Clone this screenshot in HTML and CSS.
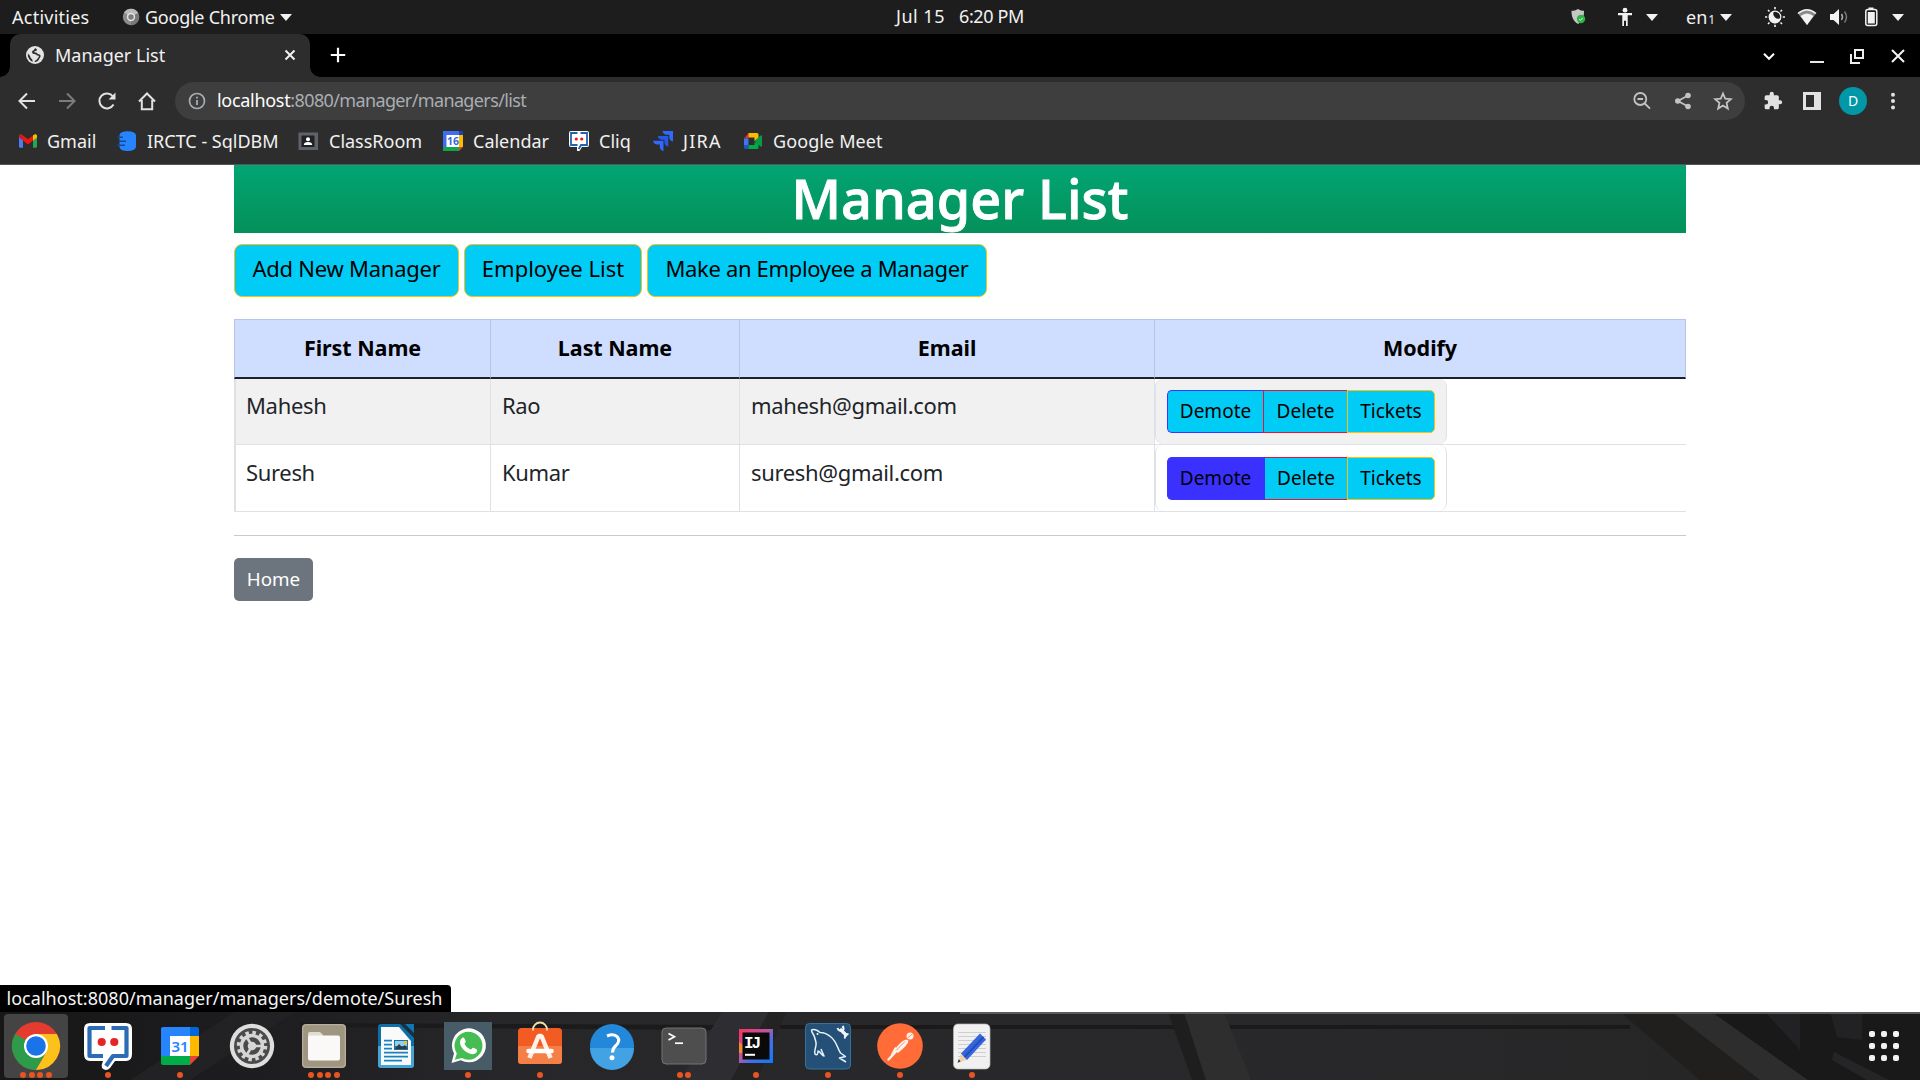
FILE: index.html
```html
<!DOCTYPE html>
<html lang="en">
<head>
<meta charset="utf-8">
<title>Manager List</title>
<link rel="stylesheet" href="styles.css">
</head>
<body>
<header class="topbar">
  <span class="activities">Activities</span>
  <span class="app-menu">
    <svg width="18" height="18" viewBox="0 0 18 18"><circle cx="9" cy="9" r="8.2" fill="#8b8b8b"/><path d="M9 9L2 4.6A8.2 8.2 0 0 1 16.2 5z" fill="#b9b9b9"/><path d="M9 9l7.2-4A8.2 8.2 0 0 1 9 17.2z" fill="#777"/><circle cx="9" cy="9" r="4.2" fill="#e4e4e4"/><circle cx="9" cy="9" r="2.7" fill="#7c7c7c"/></svg>
    <span class="app-name">Google Chrome</span>
    <svg class="caret" width="12" height="7" viewBox="0 0 12 7"><path d="M0 0h12L6 7z"/></svg>
  </span>
  <span class="clock"><span class="date">Jul 15</span><span class="time">6:20 PM</span></span>
  <span class="tray">
    <svg width="20" height="20" viewBox="0 0 20 20"><path d="M10 2c2 1.400 4 1.800 6 1.800 0 6-1 10-6 13.200-5-3.200-6.500-7.200-6.500-13.200 2.500 0 4.500-.4 6.500-1.800z" fill="#c6c6c6"/><circle cx="13" cy="12" r="4.200" fill="#2fb344"/><path d="M11.200 12l1.300 1.400 2.200-2.600" fill="none" stroke="#d9f5dd"/></svg>
    <svg class="t-access" width="20" height="20" viewBox="0 0 20 20"><circle cx="10" cy="3.200" r="2.400"/><path d="M3 6h14v2.200h-4.300v10.800h-1.700v-5.200h-2v5.200H7.300V8.200H3z"/></svg>
    <svg class="t-caret1" width="12" height="7" viewBox="0 0 12 7"><path d="M0 0h12L6 7z"/></svg>
    <span class="lang">en<small>1</small></span>
    <svg class="t-caret2" width="12" height="7" viewBox="0 0 12 7"><path d="M0 0h12L6 7z"/></svg>
    <svg class="t-night" width="20" height="20" viewBox="0 0 20 20"><path d="M9 4.200A6 6 0 1 0 15.800 11 5 5 0 0 1 9 4.200z"/><circle cx="10" cy="10" r="5.800" fill="none" stroke="#f2f2f2" stroke-width="1.200"/><path d="M10 0v2.200M10 17.800V20M0 10h2.200M17.800 10H20M3 3l1.500 1.500M15.500 15.500L17 17M17 3l-1.500 1.500M4.500 15.500L3 17" stroke="#f2f2f2" stroke-width="1.600"/></svg>
    <svg class="t-gap" width="20" height="20" viewBox="0 0 20 20"><path d="M1 6.500Q10-1 19 6.500L10 18z" fill="#8a8a8a"/><path d="M3.500 9Q10 4 16.500 9L10 18z"/><path d="M1 6.500Q10-1 19 6.500" fill="none" stroke="#f2f2f2" stroke-width="1.600"/></svg>
    <svg class="t-gap" width="20" height="20" viewBox="0 0 20 20"><path d="M1 7h3.500L10 2v16l-5.500-5H1z"/><path d="M12.500 7q2 3 0 6" fill="none" stroke="#aaa" stroke-width="1.500"/><path d="M15.500 4.500q4 5.500 0 11" fill="none" stroke="#777" stroke-width="1.500"/></svg>
    <svg class="t-gap" width="20" height="20" viewBox="0 0 20 20"><path d="M7.500.5h5v2h-5z"/><rect x="4.800" y="2.500" width="11" height="16" rx="2" fill="none" stroke="#f2f2f2" stroke-width="1.500"/><path d="M6.800 5h7v11.500h-7z"/></svg>
    <svg class="t-caret3" width="12" height="7" viewBox="0 0 12 7"><path d="M0 0h12L6 7z"/></svg>
  </span>
</header>

<div class="tabstrip">
  <div class="tab">
    <svg width="18" height="18" viewBox="0 0 18 18"><circle cx="9" cy="9" r="9" fill="#e4e4e4"/><path d="M9.800 2.200C8 2.400 8.600 4 7.200 4.500 5.600 5 6 6.400 6.500 7.300c.5 1 1.800.7 2.800.9 1.300.3 1.200 1.400 2.600 1.300 1.200 0 1.300 1.400.3 2.200-.8.700-1 2-2.200 2.300-.9.300-1.300 1.600-1.600 2.200 2.600-.4 3.900-1.400 4.700-3 .5-1.300 1.600-2 1.500-3.400-.2-1.300-1.500-1.700-2.700-1.900-1-.2-.9-1.200-2-1.300-1 0-1.800-.3-1.500-1 .3-.9 1.700-.4 2.300-1.200.5-.8-.2-1.700-.9-2.200zM1.900 7.600c-.5 3.900 1.700 7 4.700 8.200.2-1.600-.3-2.500-1.300-3.300-1.200-1-.8-2.100-1.600-3-.6-.8-1.300-1-1.800-1.900z" fill="#2d2d2d"/></svg>
    <span class="tab-title">Manager List</span>
    <svg width="12" height="12" viewBox="0 0 12 12"><path d="M1.500 1.500l9 9M10.500 1.500l-9 9" stroke="#f0f0f0" stroke-width="2"/></svg>
  </div>
  <svg class="new-tab" width="16" height="16" viewBox="0 0 16 16"><path d="M8 .8v14.400M.8 8h14.400" stroke="#fff" stroke-width="2.200"/></svg>
  <div class="win-controls">
    <svg width="20" height="20" viewBox="0 0 20 20"><path d="M5 7.800l5 5 5-5" fill="none" stroke="#fff" stroke-width="2"/></svg>
    <svg class="w-min" width="20" height="20" viewBox="0 0 20 20"><path d="M3 16h14" stroke="#e6e6e6" stroke-width="2"/></svg>
    <svg class="w-max" width="20" height="20" viewBox="0 0 20 20"><path d="M8 4h8v8H8zM4 8v9h9" fill="none" stroke="#eee" stroke-width="2"/></svg>
    <svg class="w-close" width="20" height="20" viewBox="0 0 20 20"><path d="M4 4l12 12M16 4L4 16" stroke="#f2f2f2" stroke-width="2"/></svg>
  </div>
</div>

<nav class="toolbar">
  <div class="nav-buttons">
    <svg width="24" height="24" viewBox="0 0 24 24"><path d="M20 12H5M12 4.500L4.500 12l7.500 7.500" stroke="#e2e2e2"/></svg>
    <svg width="24" height="24" viewBox="0 0 24 24"><path d="M4 12h15M12 4.500l7.500 7.500-7.500 7.500" stroke="#7c7c7c"/></svg>
    <svg width="24" height="24" viewBox="0 0 24 24"><path d="M18.500 15.500A7.500 7.500 0 1 1 18 7.500" stroke="#e2e2e2"/><path d="M20.500 3.500v7h-7z" fill="#e2e2e2"/></svg>
    <svg width="24" height="24" viewBox="0 0 24 24"><path d="M4 12.500l8-8 8 8M6.800 11v9.200h10.400V11" stroke="#e2e2e2"/></svg>
  </div>
  <div class="omnibox">
    <svg width="18" height="18" viewBox="0 0 18 18"><circle cx="9" cy="9" r="7.500" fill="none" stroke="#a9acb0" stroke-width="1.700"/><path d="M9 8v5M9 4.800v1.800" stroke="#a9acb0" stroke-width="1.800"/></svg>
    <span class="url"><b>localhost</b>:8080/manager/managers/list</span>
    <svg class="o-icon" width="20" height="20" viewBox="0 0 20 20"><circle cx="8.300" cy="8" r="6" /><path d="M5.500 8h5.600M12.800 12.500l5.200 5.200"/></svg>
    <svg class="o-icon" width="20" height="20" viewBox="0 0 20 20"><path d="M15 4.500L5 10l10 5.500"/><g fill="#c3c3c3" stroke="none"><circle cx="15" cy="4.500" r="2.800"/><circle cx="4.800" cy="10" r="2.800"/><circle cx="15" cy="15.500" r="2.800"/></g></svg>
    <svg class="o-icon" width="20" height="20" viewBox="0 0 20 20"><path d="M10 2.500l2.200 5.200 5.600.5-4.200 3.700 1.200 5.600-4.800-3-4.800 3 1.200-5.600-4.200-3.700 5.600-.5z"/></svg>
  </div>
  <svg class="b-puzzle" width="20" height="20" viewBox="0 0 24 24"><path d="M20.500 11H19V7a2 2 0 0 0-2-2h-4V3.500a2.500 2.500 0 0 0-5 0V5H4a2 2 0 0 0-2 2v3.800h1.500a2.700 2.700 0 0 1 0 5.400H2V20a2 2 0 0 0 2 2h3.800v-1.500a2.700 2.700 0 0 1 5.400 0V22H17a2 2 0 0 0 2-2v-4h1.500a2.500 2.500 0 0 0 0-5z" fill="#e2e2e2"/></svg>
  <svg class="b-panel" width="20" height="20" viewBox="0 0 20 20"><path d="M1 1h18v18H1zM4 4v12h8V4z" fill="#e2e2e2" fill-rule="evenodd"/></svg>
  <span class="avatar">D</span>
  <svg class="b-menu" width="20" height="20" viewBox="0 0 20 20"><g fill="#e2e2e2"><circle cx="10" cy="3.800" r="2"/><circle cx="10" cy="10" r="2"/><circle cx="10" cy="16.400" r="2"/></g></svg>
</nav>

<nav class="bookmarks">
  <a class="bm bm-gmail"><svg width="20" height="20" viewBox="0 0 20 20"><path d="M1 5v10.500a1.200 1.200 0 0 0 1.200 1.200H5V8z" fill="#4c7cf0"/><path d="M19 5v10.500a1.200 1.200 0 0 1-1.200 1.200H15V8z" fill="#22a652"/><path d="M15 4.500v5l4-3V5c0-2-2-2.500-4-.5z" fill="#fbbc04"/><path d="M5 4.500v5L1 6.500V5c0-2 2-2.500 4-.5z" fill="#c5221f"/><path d="M5 4.500l5 3.800 5-3.800v5l-5 4-5-4z" fill="#f2150c"/></svg>Gmail</a>
  <a class="bm bm-sql"><svg width="20" height="20" viewBox="0 0 20 20"><path d="M2.500 4Q3 .2 10.500.2T19 4v12q-1 4-8.500 4T2.500 16z" fill="#2684ff"/><path d="M0 6.300h6M2 10.300h7M0 14.300h8" stroke="#17478c" stroke-width="1.400"/></svg>IRCTC - SqlDBM</a>
  <a class="bm bm-class"><svg width="20" height="20" viewBox="0 0 20 20"><rect x=".5" y="1.500" width="19.500" height="17.500" fill="#5f6368"/><path d="M3.500 4.500h13v11.500h-13z" fill="#202124"/><circle cx="10" cy="8.300" r="2" fill="#fff"/><path d="M5.800 14q0-3 4.200-3t4.200 3z" fill="#fff"/></svg>ClassRoom</a>
  <a class="bm bm-cal"><svg width="20" height="20" viewBox="0 0 20 20"><path d="M0 0h16v16H0z" fill="#3f6df2"/><path d="M16 0h4v4h-4z" fill="#1b43b8"/><path d="M16 4h4v12h-4z" fill="#fbbc04"/><path d="M0 16h16v4H0z" fill="#13a44a"/><path d="M16 16h4l-4 4z" fill="#ea4335"/><path d="M3.500 4H16v12H3.500z" fill="#fff"/><text x="10" y="14" text-anchor="middle" font-size="10.500" font-weight="700" fill="#3468e8">16</text></svg>Calendar</a>
  <a class="bm bm-cliq"><svg width="20" height="20" viewBox="0 0 20 20"><path d="M2 0h16q2 0 2 2v12q0 2-2 2h-5l-2.500 4H8v-4H2q-2 0-2-2V2q0-2 2-2z" fill="#fff"/><path d="M8.500 2H2v12h6.500M11.500 2H18v12h-6l-2.300 4" fill="none" stroke="#2463ae" stroke-width="1.800"/><circle cx="7.300" cy="8" r="1.600" fill="#f21414"/><circle cx="12.700" cy="8" r="1.600" fill="#f21414"/></svg>Cliq</a>
  <a class="bm bm-jira"><svg width="20" height="20" viewBox="0 0 20 20"><path d="M9.500 0H20v10.500q-3.700-.8-3.700-4.600V3.800h-2.200Q10 3.600 9.500 0z" fill="#2f69ff"/><path d="M4.700 5h10.500v10.500q-3.700-.8-3.700-4.600V8.800H9.300Q5.200 8.600 4.700 5z" fill="#2459e8"/><path d="M0 9.800h10.500v10.400q-3.700-.8-3.700-4.600v-2.100H4.600Q.5 13.400 0 9.800z" fill="#2f69ff"/></svg>JIRA</a>
  <a class="bm bm-meet"><svg width="20" height="20" viewBox="0 0 20 20"><path d="M1 7.500L5.500 2v5.500z" fill="#ea2d2d"/><path d="M5.500 2H14q1.500 0 1.500 1.500V8l-4 2V6.500h-6z" fill="#ffba00"/><path d="M1 7.500h4.500V14H1z" fill="#3f74f4"/><path d="M1 14h4.500v4H2.500Q1 18 1 16.500z" fill="#1f55c4"/><path d="M5.500 14h6v-3l4 2v3.500Q15.500 18 14 18H5.500z" fill="#00ac47"/><path d="M11.500 10l6-5.500q1.500-.8 1.500.8v9.400q0 1.600-1.500.8z" fill="#0a9a44"/></svg>Google Meet</a>
</nav>

<main class="page">
  <div class="container">
    <h1 class="banner">Manager List</h1>
    <div class="actions">
      <a class="btn-lg btn-add">Add New Manager</a>
      <a class="btn-lg btn-emp">Employee List</a>
      <a class="btn-lg btn-make">Make an Employee a Manager</a>
    </div>
    <table class="managers">
      <colgroup><col class="c-first"><col class="c-last"><col class="c-email"><col class="c-modify"></colgroup>
      <thead><tr><th>First Name</th><th>Last Name</th><th>Email</th><th>Modify</th></tr></thead>
      <tbody>
        <tr class="striped"><td>Mahesh</td><td>Rao</td><td>mahesh@gmail.com</td>
          <td class="modify"><div class="group"><a class="btn demote">Demote</a><a class="btn delete">Delete</a><a class="btn tickets">Tickets</a></div></td></tr>
        <tr><td>Suresh</td><td>Kumar</td><td>suresh@gmail.com</td>
          <td class="modify"><div class="group"><a class="btn demote hovered">Demote</a><a class="btn delete">Delete</a><a class="btn tickets">Tickets</a></div></td></tr>
      </tbody>
    </table>
    <hr class="rule">
    <a class="home">Home</a>
  </div>
  <div class="status">localhost:8080/manager/managers/demote/Suresh</div>
</main>

<footer class="dock">
  <svg class="wallpaper" width="1920" height="68" viewBox="0 0 1920 68">
    <defs><linearGradient id="wood" x2="1" y2="0"><stop offset="0" stop-color="#171718"/><stop offset=".13" stop-color="#1d1d1f"/><stop offset=".26" stop-color="#272729"/><stop offset=".6" stop-color="#29292b"/><stop offset="1" stop-color="#252526"/></linearGradient></defs>
    <path d="M0 0h1920v68H0z" fill="url(#wood)"/>
    <path d="M130 68L235 0h60L190 68z" fill="#222224"/>
    <path d="M300 11L720 13v5L300 15z" fill="#1c1b1b"/>
    <path d="M780 13h850v4H780z" fill="#1b1919"/>
    <path d="M680 68L722 0h47L731 68z" fill="#2e2e32"/>
    <path d="M731 68L769 0h17L757 68z" fill="#232324"/>
    <path d="M1168 0h16l22 68h-14z" fill="#1f1e1e"/>
    <path d="M1184 0h40l27 68h-45z" fill="#2e2e2f"/>
    <path d="M1620 0h55l130 68h-105z" fill="#211f1e"/>
    <path d="M1672 0h40l96 68h-48z" fill="#2e2d2d"/>
    <path d="M1712 0h208v68h-112z" fill="#19191a"/>
    <path d="M1765 0h35v38z" fill="#222225"/><path d="M1830 0h32v28l-25-3z" fill="#222225"/><path d="M1834 40l55 28h-22l-35-20z" fill="#252527"/>
    <path d="M960 0h960v2H960z" fill="#5b5b5b"/>
  </svg>

  <div class="launcher active">
    <svg width="72" height="68" viewBox="0 0 72 68"><circle cx="36" cy="34" r="24" fill="#e33b2e"/><path d="M36 34L15.200 22A24 24 0 0 0 36 58l10.400-18z" fill="#2c9c4b"/><path d="M36 22h20.800A24 24 0 0 1 36 58l10.400-18z" fill="#fcc21b"/><circle cx="36" cy="34" r="12" fill="#fff"/><circle cx="36" cy="34" r="9.800" fill="#1a73e8"/></svg>
    <i class="dots d4"><b></b><b></b><b></b><b></b></i>
  </div>
  <div class="launcher">
    <svg width="72" height="68" viewBox="0 0 72 68"><path d="M18 11h36q6 0 6 6v25q0 7-6 7H43l-5 7q-4 4-8 0-1-3 1-7H18q-6 0-6-7V17q0-6 6-6z" fill="#fff"/><path d="M33 16H17.500v28H31M39.500 16h15v28H41L34 54" fill="none" stroke="#2b6cb5" stroke-width="4.200" stroke-linejoin="round"/><circle cx="29.700" cy="30" r="4.100" fill="#e52525"/><circle cx="42.300" cy="30" r="4.100" fill="#e52525"/></svg>
    <i class="dots"><b></b></i>
  </div>
  <div class="launcher">
    <svg width="72" height="68" viewBox="0 0 72 68"><path d="M19 15h27v29H17V17q0-2 2-2z" fill="#2684fc"/><path d="M46 15h7q2 0 2 2v7h-9z" fill="#0066da"/><path d="M46 24h9v20h-9z" fill="#ffba00"/><path d="M17 44h29v9H19q-2 0-2-2z" fill="#00ac47"/><path d="M46 44h9l-9 9z" fill="#ea4335"/><path d="M26 24h20v20H26z" fill="#fff"/><text x="36" y="39.500" text-anchor="middle" font-size="15" font-weight="600" fill="#2684fc">31</text></svg>
    <i class="dots"><b></b></i>
  </div>
  <div class="launcher">
    <svg width="72" height="68" viewBox="0 0 72 68"><circle cx="36" cy="34" r="22.200" fill="#dedede"/><circle cx="36" cy="34" r="18" fill="#4a4a4a"/><circle cx="36" cy="34" r="13.500" fill="none" stroke="#d6d6d6" stroke-width="3.500" stroke-dasharray="3.500 3.570"/><circle cx="36" cy="34" r="10.500" fill="none" stroke="#d6d6d6" stroke-width="3.500"/><circle cx="36" cy="34" r="4.300" fill="#d6d6d6"/><path d="M36 34h9M36 34l-5-8.500M36 34l-5 8.500" stroke="#d6d6d6" stroke-width="2.600"/></svg>
  </div>
  <div class="launcher">
    <svg width="72" height="68" viewBox="0 0 72 68"><rect x="14" y="12" width="44" height="44" rx="4" fill="#9f9682"/><rect x="14.700" y="12.700" width="42.600" height="42.600" rx="3.500" fill="none" stroke="#bdb5a3"/><path d="M20 22q0-2 2-2h10l3 3v6H20z" fill="#e2ddd3"/><rect x="20" y="23.500" width="32" height="25" rx="2" fill="#faf9f7"/></svg>
    <i class="dots d4"><b></b><b></b><b></b><b></b></i>
  </div>
  <div class="launcher">
    <svg width="72" height="68" viewBox="0 0 72 68"><rect x="18" y="12" width="36" height="44" rx="3" fill="#0e6ea8"/><path d="M18 34h36v19q0 3-3 3H21q-3 0-3-3z" fill="#43a5d8"/><path d="M21 15h18l12 14v24H21z" fill="#fafafa"/><path d="M40 12h14v14z" fill="#1c2f3d"/><path d="M45 12h9v9z" fill="#0e77b3"/><path d="M24 28.700h8M24 32.700h8M24 36.700h8M24 40.700h24M24 44.700h24M24 48.700h18" stroke="#1a83be" stroke-width="1.700"/><path d="M34 28h14v10H34z" fill="#1f6f9c"/><path d="M35 29h12v5H35z" fill="#8dd0ef"/><path d="M35 37l4-5 3 3 3-2 2 4z" fill="#383838"/><circle cx="45.500" cy="30.500" r="1.700" fill="#f7c322"/></svg>
  </div>
  <div class="launcher">
    <svg width="72" height="68" viewBox="0 0 72 68"><path d="M12 10h48v48H12z" fill="#475c66"/><path d="M19.500 51l2.500-9.500a17 17 0 1 1 6.800 6.800z" fill="#fff"/><path d="M22.800 47.800l2-6.400a14 14 0 1 1 5 4.600z" fill="#45bd53"/><path d="M29.500 26.500c2-2 3-.5 4.300 3 .2 1-1.600 1.800-1.200 2.600 1.500 2.800 3.500 4.400 6 5.400 1 .2 1.500-2.300 2.800-1.700 3.600 1.600 4.300 2 3.500 4-1 2.300-4.300 3-7.400 1.800-5-1.800-9-6-9.500-10.500-.1-2 .5-3.700 1.500-4.600z" fill="#fff"/></svg>
    <i class="dots"><b></b></i>
  </div>
  <div class="launcher">
    <svg width="72" height="68" viewBox="0 0 72 68"><rect x="14" y="16" width="44" height="36" rx="3.500" fill="#f25c22"/><path d="M14 34h44v14.500q0 3.500-3.500 3.500h-37q-3.500 0-3.500-3.500z" fill="#f58047"/><path d="M29 18.500v-1a7 7 0 0 1 14 0v1" fill="none" stroke="#f3dfa9" stroke-width="1.900"/><path d="M25.500 46l9-22h3l9 22" fill="none" stroke="#fff2ea" stroke-width="4.500" stroke-linejoin="bevel"/><path d="M24.500 39h23" stroke="#fff" stroke-width="4.500" stroke-linecap="round"/></svg>
    <i class="dots"><b></b></i>
  </div>
  <div class="launcher">
    <svg width="72" height="68" viewBox="0 0 72 68"><circle cx="36" cy="34" r="22" fill="#2388da"/><path d="M14 36a22 22 0 0 0 44 0z" fill="#43a2e4"/><path d="M31 24q7-3 10.500 1 3 4-1.500 8.500-3.500 3-3.500 7" fill="none" stroke="#fff" stroke-width="3"/><circle cx="36" cy="45.700" r="2.500" fill="#fff"/></svg>
  </div>
  <div class="launcher">
    <svg width="72" height="68" viewBox="0 0 72 68"><rect x="14" y="16" width="44" height="36" rx="4" fill="#4e4e4e" stroke="#727272"/><path d="M20.500 21.500l6 3.300-6 3.300" fill="none" stroke="#fff" stroke-width="1.700"/><path d="M27 31.200h8" stroke="#fff" stroke-width="1.700"/></svg>
    <i class="dots"><b></b><b></b></i>
  </div>
  <div class="launcher">
    <svg width="72" height="68" viewBox="0 0 72 68"><defs><linearGradient id="ij" x2="1" y2="1"><stop offset="0" stop-color="#fe315d"/><stop offset=".45" stop-color="#b957a5"/><stop offset=".62" stop-color="#4a6fe0"/><stop offset="1" stop-color="#087cfa"/></linearGradient></defs><path d="M19 17h34v34H19z" fill="url(#ij)"/><path d="M19 30l6 5-2 6h-4z" fill="#f08a32"/><path d="M22.500 20.500h27v27h-27z" fill="#0a0a0a"/><text x="24" y="36" class="mono" font-size="16" font-weight="700" fill="#fff" textLength="17">IJ</text><path d="M25 42.800h10" stroke="#fff" stroke-width="2"/></svg>
    <i class="dots"><b></b></i>
  </div>
  <div class="launcher">
    <svg width="72" height="68" viewBox="0 0 72 68"><rect x="13.500" y="11.500" width="45" height="45.500" rx="4" fill="#245078" stroke="#34729c"/><path d="M54 50l-6.500-4 6-1.500-5-3.500c-3-4-3.500-11-9.500-16-4-3.500-8-4.500-11-4.500-3-3-7-3.500-8.500-2.500 0 3 2.500 4 3 7 1 4 2 5 1.500 8-.5 4-2 6-1 9 2 2 3 0 3-3 2 0 3 4 6 5-1-3-2-4-3-7" fill="none" stroke="#e6f2fa" stroke-width="1.500" stroke-linejoin="round"/><circle cx="25.500" cy="22" r="1" fill="#fff"/><path d="M48 17l7 7" stroke="#eef6fc" stroke-width="3.200"/><path d="M45.500 16a4 4 0 0 0 5.500 2.500 4 4 0 0 0-.5-4.500M53 26.500q-1-4 3.500-4.500" fill="none" stroke="#eef6fc" stroke-width="2"/></svg>
    <i class="dots"><b></b></i>
  </div>
  <div class="launcher">
    <svg width="72" height="68" viewBox="0 0 72 68"><circle cx="36" cy="34" r="22.800" fill="#ff6c37"/><circle cx="46" cy="24" r="3.500" fill="#fff4ee"/><path d="M44.500 28.500q0 4-10.500 12.500l-3.500-3q5-8 11.500-10.500z" fill="#fff4ee"/><path d="M32 39.500l-7.500 8M31.500 36.500L28 43" stroke="#fff4ee" stroke-width="2.400" stroke-linecap="round"/><path d="M32 38.500l9-9M43.500 26l5-4" stroke="#ff6c37" stroke-width=".8"/></svg>
    <i class="dots"><b></b></i>
  </div>
  <div class="launcher">
    <svg width="72" height="68" viewBox="0 0 72 68"><rect x="17.500" y="12" width="36.500" height="45" rx="4.500" fill="#f1f1f1" stroke="#b8b8b8" stroke-width=".7"/><path d="M22 20.500h28M22 24.500h28M22 28.500h28M22 32.500h28M22 36.500h28M22 40.500h28M22 44.500h28" stroke="#cfcfcf"/><path d="M25 42l6 6-9 2.500z" fill="#f3cfa5"/><path d="M22.800 47l1.800 2.500-3 1.200z" fill="#333"/><path d="M25 41.500l19-20 6 6-19 20.500z" fill="#3465dd"/><path d="M28.500 45l19-20" stroke="#234ab0" stroke-width="1.800"/></svg>
    <i class="dots"><b></b></i>
  </div>
  <svg class="apps" width="30" height="30" viewBox="0 0 30 30"><g fill="#f3f3f3"><rect width="6" height="6" rx="2"/><rect x="12" width="6" height="6" rx="2"/><rect x="24" width="6" height="6" rx="2"/><rect y="12" width="6" height="6" rx="2"/><rect x="12" y="12" width="6" height="6" rx="2"/><rect x="24" y="12" width="6" height="6" rx="2"/><rect y="24" width="6" height="6" rx="2"/><rect x="12" y="24" width="6" height="6" rx="2"/><rect x="24" y="24" width="6" height="6" rx="2"/></g></svg>
</footer>
</body>
</html>
```
FILE: styles.css
```css
* { box-sizing: border-box; }
body {
  margin: 0;
  width: 1920px;
  height: 1080px;
  overflow: hidden;
  display: flex;
  flex-direction: column;
  background: #fff;
  font-family: "Noto Sans", "Open Sans", sans-serif;
  font-size: 18px;
  color: #212529;
}
svg { display: block; flex: none; }
span, a { white-space: nowrap; }

/* Desktop top bar */
.topbar {
  height: 34px;
  flex: none;
  display: grid;
  grid-template-columns: 122px 774px 1fr auto;
  align-items: center;
  padding-right: 16px;
  background: #1d1d1d;
  color: #f2f2f2;
  fill: #f2f2f2;
}
.activities { padding-left: 12px; letter-spacing: .25px; }
.app-menu { display: flex; align-items: center; }
.app-name { margin-left: 5px; width: 135px; letter-spacing: -.25px; }
.clock { display: flex; line-height: 32px; align-self: start; }
.date { width: 63px; letter-spacing: .5px; }
.time { letter-spacing: -.4px; }
.tray { display: flex; align-items: center; }
.t-access { margin-left: 27px; }
.t-caret1, .t-caret3 { margin-left: 11px; }
.lang { width: 26px; margin-left: 28px; }
.lang small { font-size: 12px; margin-left: 1px; }
.t-caret2 { margin-left: 8px; }
.t-night { margin-left: 33px; }
.t-gap { margin-left: 12px; }

/* Browser chrome */
.tabstrip {
  height: 43px;
  flex: none;
  display: flex;
  align-items: center;
  padding: 0 12px 0 10px;
  background: #000;
  color: #f1f1f1;
}
.tab {
  position: relative;
  width: 300px;
  height: 43px;
  display: flex;
  align-items: center;
  padding: 0 14px 2px 16px;
  background: #2d2d2d;
  border-radius: 10px 10px 0 0;
}
.tab::before, .tab::after {
  content: "";
  position: absolute;
  bottom: 0;
  width: 10px;
  height: 10px;
}
.tab::before { left: -10px; background: radial-gradient(circle at 0 0, #000 9.500px, #2d2d2d 10px); }
.tab::after { right: -10px; background: radial-gradient(circle at 100% 0, #000 9.500px, #2d2d2d 10px); }
.tab-title { flex: 1; margin-left: 11px; }
.new-tab { margin: 0 auto 1px 20px; }
.win-controls { display: flex; }
.w-min { margin-left: 28px; }
.w-max { margin-left: 20px; }
.w-close { margin-left: 21px; }

.toolbar {
  height: 48px;
  flex: none;
  display: flex;
  align-items: center;
  padding: 0 17px 0 15px;
  background: #2d2d2d;
}
.nav-buttons { display: flex; gap: 16px; width: 160px; padding-bottom: 1px; fill: none; stroke-width: 2; }
.omnibox {
  width: 1570px;
  height: 38px;
  display: flex;
  align-items: center;
  gap: 20.500px;
  padding: 0 12px 1px 13px;
  border-radius: 19px;
  background: #3e3e3e;
}
.url { flex: 1; margin-left: -9.500px; padding-bottom: 1px; color: #a9adb3; letter-spacing: -.63px; }
.url b { font-weight: 400; color: #fff; letter-spacing: -.3px; }
.o-icon { fill: none; stroke: #c3c3c3; stroke-width: 1.800; }
.b-puzzle { margin-left: 18px; }
.b-panel { margin-left: 19px; }
.avatar {
  width: 28px;
  height: 28px;
  margin-left: 17px;
  border-radius: 50%;
  background: #0097a7;
  color: #fff;
  font-size: 14px;
  line-height: 28px;
  text-align: center;
}
.b-menu { margin-left: 16px; }

.bookmarks {
  height: 40px;
  flex: none;
  display: flex;
  padding: 0 0 7px 18px;
  background: #2d2d2d;
  border-bottom: 1px solid #555;
  color: #f1f1f1;
}
.bm { display: flex; align-items: center; gap: 10px; line-height: 32px; }
.bm-gmail { width: 99px; gap: 9px; }
.bm-sql { width: 181px; }
.bm-class { width: 145px; gap: 11px; }
.bm-cal { width: 126px; }
.bm-cliq { width: 84px; }
.bm-jira { width: 90px; letter-spacing: 1.300px; }
.bm-meet { letter-spacing: .1px; }

/* Page */
.page { position: relative; flex: 1; }
.container { width: 1452px; margin: 0 234px; }
.banner {
  margin: 0;
  height: 68px;
  background: linear-gradient(#02a573, #04905a);
  color: #fff;
  font-size: 54px;
  font-weight: 500;
  line-height: 67px;
  text-align: center;
  -webkit-text-stroke: .9px #fff;
}
.actions { display: flex; gap: 5px; margin-top: 11px; }
.btn-lg {
  height: 53px;
  border: 1px solid #ffc107;
  border-radius: 8px;
  background: #00ccf5;
  color: #000;
  font-size: 22px;
  line-height: 47px;
  text-align: center;
}
.btn-add { width: 225px; letter-spacing: -.25px; }
.btn-emp { width: 178px; }
.btn-make { width: 340px; letter-spacing: -.33px; }

.managers {
  width: 1452px;
  margin-top: 22px;
  table-layout: fixed;
  border-collapse: separate;
  border-spacing: 0;
  font-size: 22px;
}
.c-first { width: 257px; }
.c-last { width: 249px; }
.c-email { width: 415px; }
.c-modify { width: 531px; }
.managers th {
  height: 60px;
  padding: 0 0 2px;
  background: #cfddff;
  border: solid #b7c6e8;
  border-width: 1px 1px 2px 0;
  border-bottom-color: #1c2228;
  color: #000;
  font-size: 21.500px;
  font-weight: 700;
  letter-spacing: -.05px;
}
.managers th:first-child { border-left: 1px solid #b7c6e8; }
.managers td {
  height: 66px;
  padding: 11px 11px 0;
  border: solid #dee2e6;
  border-width: 0 1px 1px 0;
  line-height: 30px;
  vertical-align: top;
  letter-spacing: -.33px;
}
.managers tr:last-child td { height: 67px; padding-top: 12px; }
.managers td:first-child { border-left: 2px solid #dee2e6; padding-left: 10px; }
.managers .striped td { background: #f1f1f1; }
.managers tr .modify, .managers tr:last-child .modify { padding: 0; border-right: 0; background: #fff; }
.group {
  display: flex;
  width: 292px;
  height: 65px;
  padding: 11px;
  border: solid #dee2e6;
  border-width: 0 1px;
  border-radius: 8px;
}
tr:last-child .group { height: 66px; padding-top: 12px; }
.striped .group { background: #f1f1f1; }
.btn {
  height: 43px;
  border: 1px solid;
  background: #00ccf5;
  color: #000;
  font-size: 19px;
  line-height: 41px;
  text-align: center;
  letter-spacing: 0;
}
.demote { width: 96px; border-color: #3a35ff; border-right: 0; border-radius: 5px 0 0 5px; }
.delete { width: 84px; border-color: #e8103c; border-right: 0; }
.tickets { width: 88px; border-color: #ffc107; border-radius: 0 5px 5px 0; }
.hovered { width: 98px; padding-right: 2px; background: #3a31ff; }
.hovered + .delete { width: 82px; border-left: 0; }
.rule { height: 1px; margin: 23px 0 22px; border: 0; background: #c8cacb; }
.home {
  display: block;
  width: 79px;
  height: 43px;
  border-radius: 5px;
  background: #6c757d;
  color: #fff;
  font-size: 18.800px;
  line-height: 42px;
  text-align: center;
}
.status {
  position: absolute;
  left: 0;
  bottom: 0;
  width: 451px;
  height: 27px;
  padding-left: 6.500px;
  border-top-right-radius: 4px;
  background: #000;
  color: #f5f5f5;
  line-height: 26px;
  letter-spacing: .03px;
}

/* Dock */
.dock {
  position: relative;
  height: 68px;
  flex: none;
  display: flex;
  align-items: center;
}
.wallpaper { position: absolute; inset: 0; }
.launcher { position: relative; width: 72px; height: 68px; }
.launcher.active::before {
  content: "";
  position: absolute;
  inset: 2px 4px;
  border-radius: 4px;
  background: #444;
}
.launcher svg { position: relative; }
.dots {
  position: absolute;
  left: 0;
  right: 0;
  bottom: 2px;
  display: flex;
  justify-content: center;
  gap: 2.800px;
}
.dots b { width: 6px; height: 6px; border-radius: 50%; background: #e95420; }
.mono { font-family: "Liberation Mono", monospace; }
.apps { position: relative; margin: 0 21px 0 auto; }
```
